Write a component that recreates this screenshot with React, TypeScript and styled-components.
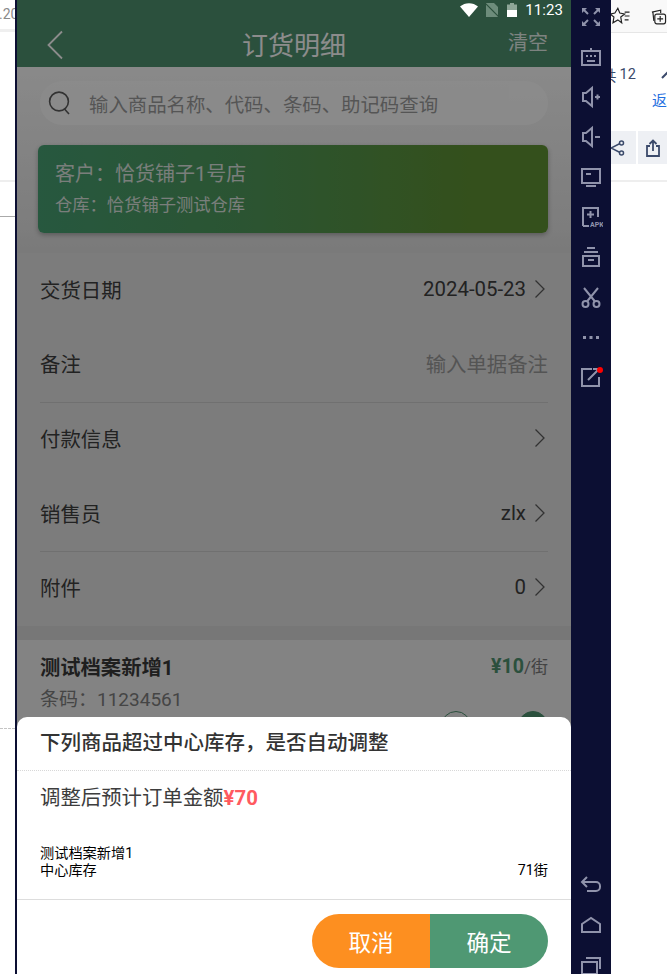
import type { ReactNode } from 'react';
import styled, { createGlobalStyle } from 'styled-components';

const COLON = '\uFF1A';
const COMMA = '\uFF0C';

const GlobalStyle = createGlobalStyle`
  html, body {
    margin: 0;
    padding: 0;
    background: #fff;
    overflow: hidden;
  }
  * {
    box-sizing: border-box;
  }
  body {
    font-family: Roboto, "Noto Sans CJK SC", sans-serif;
  }
`;

const Screen = styled.div`
  display: flex;
  width: 667px;
  height: 974px;
  overflow: hidden;
`;

/* window behind the emulator, left side */
const LeftStrip = styled.div`
  flex: 0 0 15px;
  display: flex;
  flex-direction: column;
  overflow: hidden;
`;

const ClippedDate = styled.div`
  height: 29px;
  padding-top: 5px;
  font-size: 14px;
  line-height: 18px;
  color: #8a8a8a;
  white-space: nowrap;
  text-indent: -1px;
`;

const StripRule = styled.div<{ $top: number; $color: string; $h?: number }>`
  margin-top: ${p => p.$top}px;
  height: ${p => p.$h ?? 1}px;
  background: ${p => p.$color};
`;

const DashedRule = styled.div`
  margin-top: 511px;
  border-top: 1px dashed #c4c4c4;
`;

const Phone = styled.div`
  position: relative;
  flex: 0 0 556px;
  border-left: 2px solid #0c0f33;
  display: flex;
  flex-direction: column;
  overflow: hidden;
  background: #f1f1f1;
`;

const Header = styled.header`
  height: 67px;
  flex: none;
  background: #4f9270;
  display: grid;
  grid-template-columns: 1fr auto 1fr;
  align-items: center;
  padding: 24px 23px 0;
  color: #fff;
`;

const BackBtn = styled.div`
  display: flex;
  align-items: center;
  padding-left: 6px;
  margin-top: -2px;
`;

const HeaderTitle = styled.div`
  font-size: 26px;
  line-height: 36px;
`;

const ClearBtn = styled.div`
  justify-self: end;
  font-size: 20px;
  line-height: 28px;
  margin-top: -5px;
  opacity: 0.85;
`;

const StatusBar = styled.div`
  position: absolute;
  z-index: 3;
  top: 0;
  right: 8px;
  height: 20px;
  display: flex;
  align-items: center;
  color: #fff;
  font-size: 15px;
`;

const StatusTime = styled.span`
  margin-left: 8px;
  letter-spacing: 0.1px;
`;

const TopArea = styled.div`
  flex: none;
  height: 186px;
  padding: 14px 23px 0 21px;
  background: linear-gradient(#fafafa, #e4e4e4 85%, #dedede);
`;

const SearchBar = styled.div`
  height: 44px;
  margin: 0 0 20px 2px;
  border-radius: 22px;
  background: #fff;
  opacity: 0.72;
  display: flex;
  align-items: center;
  padding-left: 8px;
  color: #7a7a7a;
  font-size: 19.4px;
`;

const SearchText = styled.span`
  margin-left: 17px;
  white-space: nowrap;
`;

const CustomerCard = styled.div`
  height: 88px;
  border-radius: 6px;
  background: linear-gradient(90deg, #47a073 0%, #4f9a5c 40%, #5f9233 85%, #5f9233 100%);
  box-shadow: 0 2px 5px rgba(0, 0, 0, 0.28);
  padding: 14px 17px 0;
  color: #dfe6e0;
`;

const CustomerLine = styled.div<{ $size: number; $lh: number }>`
  font-size: ${p => p.$size}px;
  line-height: ${p => p.$lh}px;
`;

const RowList = styled.div`
  flex: none;
  background: #e2e2e2;
  padding: 0 23px;
  display: flex;
  flex-direction: column;
`;

const Row = styled.div<{ $divider?: boolean }>`
  height: 74.6px;
  padding-bottom: 3px;
  display: flex;
  align-items: center;
  justify-content: space-between;
  box-shadow: ${p => (p.$divider ? '0 1px 0 #cccccc' : 'none')};
  color: #3e3e3e;
  font-size: 20.4px;
`;

const RowValue = styled.div<{ $muted?: boolean }>`
  display: flex;
  align-items: center;
  gap: 8px;
  padding-right: ${p => (p.$muted ? 0 : 2)}px;
  color: ${p => (p.$muted ? '#9a9a9a' : '#3e3e3e')};
`;

const SectionGap = styled.div`
  flex: none;
  height: 14px;
  background: #d9d9d9;
`;

const Product = styled.div`
  flex: 1;
  padding: 14px 23px 0;
  background: #eeeeee;
`;

const ProductTop = styled.div`
  display: flex;
  align-items: center;
  justify-content: space-between;
  height: 24px;
`;

const ProductName = styled.div`
  font-size: 20.3px;
  font-weight: 700;
  color: #3a3a3a;
`;

const Price = styled.div`
  font-size: 17px;
  color: #7a7a7a;
`;

const PriceNumber = styled.b`
  font-size: 19.6px;
  color: #4f9270;
`;

const ProductCode = styled.div`
  margin-top: 9px;
  font-size: 19px;
  line-height: 26px;
  color: #7e7e7e;
`;

const Stepper = styled.div`
  margin-top: -2px;
  display: flex;
  justify-content: flex-end;
  gap: 47px;
`;

const StepBtn = styled.div<{ $filled?: boolean }>`
  width: 30px;
  height: 30px;
  border-radius: 50%;
  border: 1.5px solid #4f9270;
  background: ${p => (p.$filled ? '#4f9270' : 'transparent')};
`;

const Mask = styled.div`
  position: absolute;
  inset: 0;
  z-index: 1;
  background: rgba(0, 0, 0, 0.45);
`;

const Sheet = styled.div`
  position: absolute;
  z-index: 2;
  left: 0;
  right: 0;
  bottom: 0;
  height: 257px;
  background: #fff;
  border-radius: 10px 10px 0 0;
  display: flex;
  flex-direction: column;
`;

const SheetTitle = styled.div`
  flex: none;
  height: 54px;
  border-bottom: 1px dotted #d8d8d8;
  padding: 12px 23px 0;
  font-size: 20.5px;
  line-height: 28px;
  font-weight: 500;
  color: #333;
`;

const SheetBody = styled.div`
  flex: 1;
  padding: 12px 23px 0;
  border-bottom: 1px solid #dddddd;
`;

const Amount = styled.div`
  font-size: 20.4px;
  line-height: 30px;
  color: #3d3d3d;
`;

const AmountValue = styled.b`
  color: #ff5a5f;
`;

const StockName = styled.div`
  margin-top: 32px;
  font-size: 14.2px;
  line-height: 17px;
  color: #000;
`;

const StockRow = styled.div`
  display: flex;
  justify-content: space-between;
  font-size: 14.2px;
  line-height: 17px;
  color: #000;
`;

const SheetFooter = styled.div`
  flex: none;
  height: 74px;
  padding: 14px 23px 0;
  display: flex;
  justify-content: flex-end;
`;

const FooterBtn = styled.div<{ $side: 'left' | 'right' }>`
  width: 118px;
  height: 54px;
  display: flex;
  align-items: center;
  justify-content: center;
  color: #fff;
  font-size: 22.6px;
  background: ${p => (p.$side === 'left' ? '#fd8f20' : '#4f9873')};
  border-radius: ${p => (p.$side === 'left' ? '27px 0 0 27px' : '0 27px 27px 0')};
`;

const SideBar = styled.div`
  flex: 0 0 40px;
  background: #0c0f33;
  color: #9093ab;
  display: flex;
  flex-direction: column;
  justify-content: space-between;
  overflow: hidden;
`;

const SideGroup = styled.div<{ $offset: string }>`
  display: flex;
  flex-direction: column;
  margin: ${p => p.$offset};
`;

const SideBtn = styled.div`
  position: relative;
  height: 40px;
  display: flex;
  align-items: center;
  justify-content: center;
`;

const RedDot = styled.span`
  position: absolute;
  top: 10px;
  right: 8px;
  width: 6px;
  height: 6px;
  border-radius: 50%;
  background: #ff0000;
`;

/* window behind the emulator, right side */
const RightStrip = styled.div`
  flex: 1;
  min-width: 0;
  display: flex;
  flex-direction: column;
  overflow: hidden;
`;

const BrowserBar = styled.div`
  height: 33px;
  flex: none;
  background: #f9f9f9;
  border-bottom: 1px solid #e6e6e6;
  display: flex;
  align-items: center;
  gap: 17px;
  color: #222;
`;

const PagerRow = styled.div`
  height: 54px;
  flex: none;
  display: flex;
  align-items: center;
  padding-top: 29px;
  margin-left: -9px;
  font-size: 14.5px;
  color: #3b4a6b;
  white-space: nowrap;
`;

const PagerNum = styled.span`
  margin-left: 3px;
`;

const UpCaret = styled.span`
  display: flex;
  flex: none;
  margin-left: 25px;
`;

const BackLink = styled.div`
  flex: none;
  height: 28px;
  padding: 4px 0 0 41px;
  font-size: 15px;
  line-height: 20px;
  color: #1f6fe0;
  white-space: nowrap;
`;

const ToolRow = styled.div`
  flex: none;
  height: 33px;
  margin-top: 16px;
  display: flex;
  gap: 2px;
  color: #3b4a6b;
`;

const ToolBtn = styled.div<{ $w: number }>`
  flex: 0 0 ${p => p.$w}px;
  display: flex;
  align-items: center;
  justify-content: ${p => (p.$w < 28 ? 'flex-start' : 'center')};
  background: #eef0f4;
`;

const ToolRule = styled.div`
  margin-top: 16px;
  height: 2px;
  background: #eeeeee;
`;

const Chevron = () => (
  <svg width="12" height="20" viewBox="0 0 12 20" fill="none" stroke="#5c5c5c" strokeWidth="1.3">
    <path d="M1.5 1.5 10 10 1.5 18.5" />
  </svg>
);

const SideIcon = ({ children }: { children: ReactNode }) => (
  <svg width="24" height="24" viewBox="0 0 24 24" fill="none" stroke="currentColor" strokeWidth="2">
    {children}
  </svg>
);

const rows = [
  { label: '交货日期', value: '2024-05-23', arrow: true },
  { label: '备注', value: '输入单据备注', muted: true, divider: true },
  { label: '付款信息', value: '', arrow: true },
  { label: '销售员', value: 'zlx', arrow: true, divider: true },
  { label: '附件', value: '0', arrow: true },
];

export default function App() {
  return (
    <Screen>
      <GlobalStyle />
      <LeftStrip>
        <ClippedDate>.20</ClippedDate>
        <StripRule $top={0} $h={3} $color="#efefef" />
        <StripRule $top={148} $h={2} $color="#eeeeee" />
        <StripRule $top={34} $color="#aaaaaa" />
        <DashedRule />
      </LeftStrip>

      <Phone>
        <Header>
          <BackBtn>
            <svg width="18" height="30" viewBox="0 0 18 30" fill="none" stroke="#fff" strokeWidth="1.8">
              <path d="M16 1.5 2.5 15 16 28.5" />
            </svg>
          </BackBtn>
          <HeaderTitle>订货明细</HeaderTitle>
          <ClearBtn>清空</ClearBtn>
        </Header>

        <TopArea>
          <SearchBar>
            <svg width="24" height="26" viewBox="0 0 24 26" fill="none" stroke="#222" strokeWidth="1.6">
              <circle cx="11" cy="11.5" r="9.4" />
              <path d="M16.5 19 21 24" />
            </svg>
            <SearchText>输入商品名称、代码、条码、助记码查询</SearchText>
          </SearchBar>
          <CustomerCard>
            <CustomerLine $size={20} $lh={30}>{`客户${COLON}恰货铺子1号店`}</CustomerLine>
            <CustomerLine $size={17.3} $lh={32}>{`仓库${COLON}恰货铺子测试仓库`}</CustomerLine>
          </CustomerCard>
        </TopArea>

        <RowList>
          {rows.map(r => (
            <Row key={r.label} $divider={r.divider}>
              <span>{r.label}</span>
              <RowValue $muted={r.muted}>
                {r.value && <span>{r.value}</span>}
                {r.arrow && <Chevron />}
              </RowValue>
            </Row>
          ))}
        </RowList>
        <SectionGap />

        <Product>
          <ProductTop>
            <ProductName>测试档案新增1</ProductName>
            <Price>
              <PriceNumber>¥10</PriceNumber>/街
            </Price>
          </ProductTop>
          <ProductCode>{`条码${COLON}11234561`}</ProductCode>
          <Stepper>
            <StepBtn />
            <StepBtn $filled />
          </Stepper>
        </Product>

        <Mask />

        <StatusBar>
          <svg width="18" height="14" viewBox="0 0 18 14" fill="#fff">
            <path d="M0 3.5C5 -1 13 -1 18 3.5L9 14Z" />
          </svg>
          <svg width="14" height="14" viewBox="0 0 14 14" style={{ marginLeft: 7 }}>
            <path d="M1 0H9L13 4V14H1Z" fill="#6d8c7b" />
            <path d="M0 0 14 14" stroke="#2b4f3c" strokeWidth="1.2" />
          </svg>
          <svg width="10" height="14" viewBox="0 0 10 14" style={{ marginLeft: 8 }}>
            <path d="M3 0H7V1.5H10V7H0V1.5H3Z" fill="#8ea698" />
            <path d="M0 7H10V14H0Z" fill="#fff" />
          </svg>
          <StatusTime>11:23</StatusTime>
        </StatusBar>

        <Sheet>
          <SheetTitle>{`下列商品超过中心库存${COMMA}是否自动调整`}</SheetTitle>
          <SheetBody>
            <Amount>
              调整后预计订单金额<AmountValue>¥70</AmountValue>
            </Amount>
            <StockName>测试档案新增1</StockName>
            <StockRow>
              <span>中心库存</span>
              <span>71街</span>
            </StockRow>
          </SheetBody>
          <SheetFooter>
            <FooterBtn $side="left">取消</FooterBtn>
            <FooterBtn $side="right">确定</FooterBtn>
          </SheetFooter>
        </Sheet>
      </Phone>

      <SideBar>
        <SideGroup $offset="-3px 0 0">
          <SideBtn>
            <SideIcon>
              <path d="M3 3h5L3 8Z M21 3h-5l5 5Z M3 21h5l-5-5Z M21 21h-5l5-5Z" fill="currentColor" stroke="none" />
              <path d="M5 5l4 4 M19 5l-4 4 M5 19l4-4 M19 19l-4-4" />
            </SideIcon>
          </SideBtn>
          <SideBtn>
            <SideIcon>
              <path d="M3 6h18v14H3Z M12 3v3" />
              <path d="M7 11h2 M11 11h2 M15 11h2 M8 16h8" />
            </SideIcon>
          </SideBtn>
          <SideBtn>
            <SideIcon>
              <path d="M4 8h3l6-5v18l-6-5H4Z" />
              <path d="M16 12h5 M18.5 9.5v5" />
            </SideIcon>
          </SideBtn>
          <SideBtn>
            <SideIcon>
              <path d="M4 8h3l6-5v18l-6-5H4Z" />
              <path d="M16 12h5" />
            </SideIcon>
          </SideBtn>
          <SideBtn>
            <SideIcon>
              <path d="M3 4h18v14H3Z M7 9h5 M7 21h10" />
            </SideIcon>
          </SideBtn>
          <SideBtn>
            <SideIcon>
              <path d="M4 21V3h15v9 M4 21h6 M11.5 6v7 M8 9.5h7" />
              <text x="11" y="22" fontSize="7" fontWeight="700" fontFamily="Roboto, sans-serif" fill="currentColor" stroke="none">APK</text>
            </SideIcon>
          </SideBtn>
          <SideBtn>
            <SideIcon>
              <path d="M8 3h8 M5 7h14 M4 11h16v10H4Z M9 15h6" />
            </SideIcon>
          </SideBtn>
          <SideBtn>
            <SideIcon>
              <circle cx="6.5" cy="19" r="3" />
              <circle cx="17.5" cy="19" r="3" />
              <path d="M8 16.5 19 3 M16 16.5 5 3" />
            </SideIcon>
          </SideBtn>
          <SideBtn>
            <SideIcon>
              <path d="M4 11h3v3H4Z M10.5 11h3v3h-3Z M17 11h3v3h-3Z" fill="currentColor" stroke="none" />
            </SideIcon>
          </SideBtn>
          <SideBtn>
            <SideIcon>
              <path d="M13 4H3v17h17V12 M9 15 20 4 M14 4h6" />
            </SideIcon>
            <RedDot />
          </SideBtn>
        </SideGroup>
        <SideGroup $offset="0 0 -11px">
          <SideBtn>
            <SideIcon>
              <path d="M3 9h14a4 4 0 0 1 4 4v1a4 4 0 0 1-4 4H8 M8 4 3 9l5 5" />
            </SideIcon>
          </SideBtn>
          <SideBtn>
            <SideIcon>
              <path d="M3 11 12 5l9 6v8H3Z" />
            </SideIcon>
          </SideBtn>
          <SideBtn>
            <SideIcon>
              <path d="M3 9h15v12H3Z M7 5h14v11" />
            </SideIcon>
          </SideBtn>
        </SideGroup>
      </SideBar>

      <RightStrip>
        <BrowserBar>
          <svg width="20" height="20" viewBox="0 0 20 20" fill="none" stroke="#222" strokeWidth="1.2">
            <path d="M7 2 9 7 14 8 10 11 11 17 7 14 2 17 3 11 -1 8 4 7Z M14 6h5 M14 10h5 M14 14h4" />
          </svg>
          <svg width="20" height="20" viewBox="0 0 20 20" fill="none" stroke="#222" strokeWidth="1.2">
            <path d="M4 6 13 4V7 M5 6 6 15" />
            <rect x="7" y="8" width="11" height="10" rx="2" />
            <path d="M12.5 10v6 M9.5 13h6" />
          </svg>
        </BrowserBar>
        <PagerRow>
          <span>共</span>
          <PagerNum>12</PagerNum>
          <UpCaret>
            <svg width="12" height="8" viewBox="0 0 12 8" fill="none" stroke="#3b4a6b" strokeWidth="2">
              <path d="M1 7 6 2l5 5" />
            </svg>
          </UpCaret>
        </PagerRow>
        <BackLink>返回</BackLink>
        <ToolRow>
          <ToolBtn $w={25}>
            <svg width="14" height="16" viewBox="0 0 14 16" fill="none" stroke="#3b4a6b" strokeWidth="1.5">
              <circle cx="10.5" cy="3" r="2" />
              <circle cx="10.5" cy="13" r="2" />
              <path d="M0 8 9 3.5 M0 8 9 12.5" />
            </svg>
          </ToolBtn>
          <ToolBtn $w={29}>
            <svg width="16" height="18" viewBox="0 0 16 18" fill="none" stroke="#3b4a6b" strokeWidth="1.8">
              <path d="M5 7H2v10h12V7h-3 M8 12V2 M4.5 5 8 1.5 11.5 5" />
            </svg>
          </ToolBtn>
        </ToolRow>
        <ToolRule />
      </RightStrip>
    </Screen>
  );
}
